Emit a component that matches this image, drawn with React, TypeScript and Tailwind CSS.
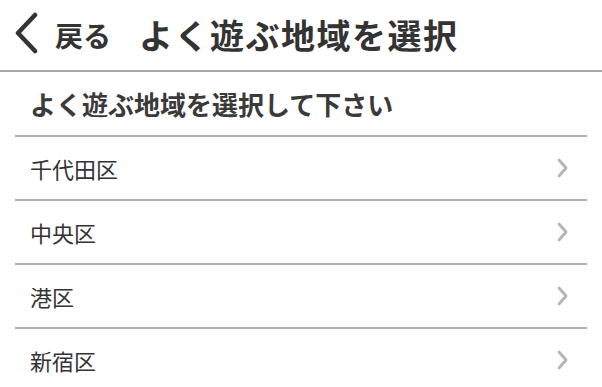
import { Fragment } from 'react';

const AREAS = ['千代田区', '中央区', '港区', '新宿区'];

const font = { fontFamily: '"Noto Sans CJK JP", "Noto Sans", sans-serif' };

export default function App() {
    return (
        <div className="w-[602px] h-[387px] overflow-hidden bg-white text-[#333]" style={font}>
            {/* Header */}
            <div className="h-[72px] flex items-center border-b-2 border-[#a8a8a8]">
                <svg width="26" height="44" viewBox="0 0 26 44" className="ml-[13px] mb-[3px] shrink-0">
                    <polyline points="22,3 5,21 22,39" fill="none" stroke="#333" strokeWidth="4.5" strokeLinecap="round" strokeLinejoin="round" />
                </svg>
                <span className="ml-[16px] text-[28px] font-bold leading-none">戻る</span>
                <h1 className="ml-[28px] text-[34px] font-bold leading-none tracking-[1.5px]">よく遊ぶ地域を選択</h1>
            </div>

            {/* Area list */}
            <div className="mx-[15px]">
                <div className="h-[65px] flex items-center px-[15px] border-b-2 border-[#b0b0b0]">
                    <p className="text-[26px] font-bold leading-none text-[#3a3a3a]">よく遊ぶ地域を選択して下さい</p>
                </div>
                {AREAS.map(a => (
                    <Fragment key={a}>
                        <div className="h-[64px] flex items-center justify-between pl-[15px] pr-[18px] border-b-2 border-[#b0b0b0]">
                            <span className="text-[22px] leading-none">{a}</span>
                            <svg width="13" height="20" viewBox="0 0 13 20">
                                <polyline points="3,2 10,10 3,18" fill="none" stroke="#b5b5b5" strokeWidth="2.8" strokeLinecap="round" strokeLinejoin="round" />
                            </svg>
                        </div>
                    </Fragment>
                ))}
            </div>
        </div>
    );
}
